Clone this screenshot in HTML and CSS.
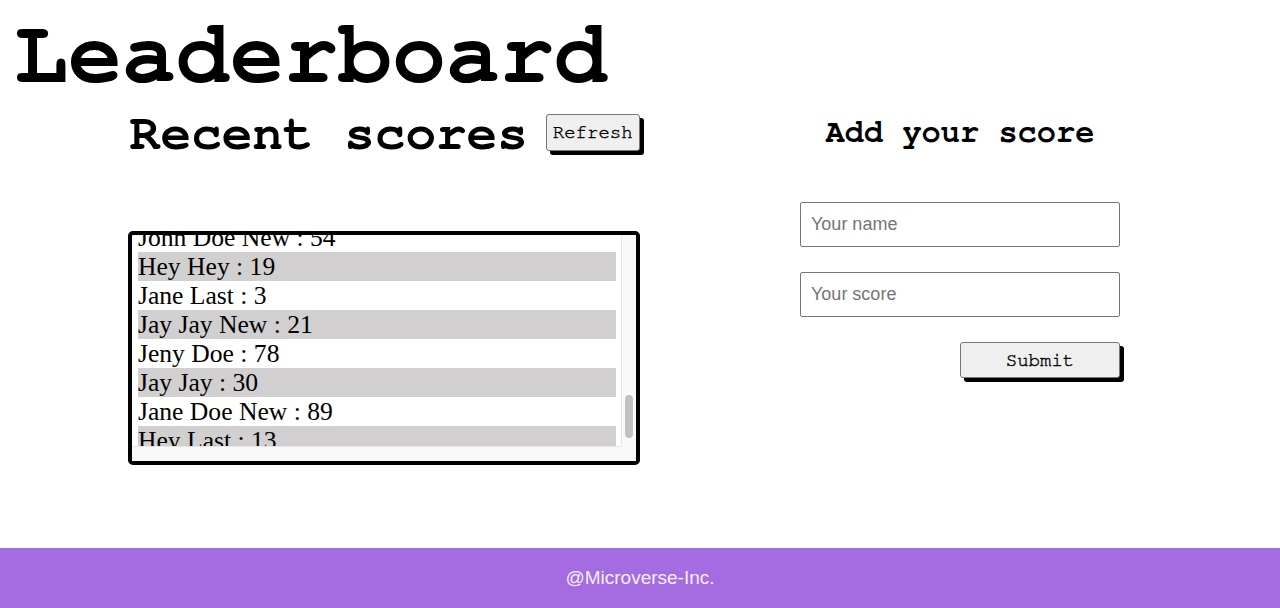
FILE: index.html
```html
<!DOCTYPE html>
<html lang="en">
<head>
<meta charset="utf-8">
<title>Leaderboard</title>
<link rel="stylesheet" href="styles.css">
</head>
<body>
<div class="page">
  <h1 class="title">Leaderboard</h1>
  <main class="main">
    <section class="recent">
      <div class="recent-head">
        <h2 class="recent-title">Recent scores</h2>
        <button class="btn btn-refresh" type="button">Refresh</button>
      </div>
      <div class="scores-box">
        <ul class="scores">
          <li>John Doe : 42</li>
          <li>Jane Doe : 65</li>
          <li>Jay Jay : 12</li>
          <li>Hey Hey : 47</li>
          <li>Jane Last : 8</li>
          <li>John Last : 33</li>
          <li>Jeny Doe : 51</li>
          <li>Hey Last : 27</li>
          <li>John Doe New : 70</li>
          <li>Jane Doe New : 14</li>
          <li>Jay Jay New : 36</li>
          <li>Jeny Last : 90</li>
          <li>John Doe : 23</li>
          <li>Jane Doe : 58</li>
          <li>Hey Hey : 4</li>
          <li>Jay Jay : 61</li>
          <li>Jane Last : 39</li>
          <li>Jeny Doe : 17</li>
          <li>John Last : 82</li>
          <li>Hey Last : 45</li>
          <li>Jane Doe New : 26</li>
          <li>Jay Jay New : 73</li>
          <li>John Doe : 9</li>
          <li>Jeny Last : 64</li>
          <li>Jane Doe : 31</li>
          <li>Hey Hey : 88</li>
          <li>John Last : 15</li>
          <li>John Doe New : 54</li>
          <li>Hey Hey : 19</li>
          <li>Jane Last : 3</li>
          <li>Jay Jay New : 21</li>
          <li>Jeny Doe : 78</li>
          <li>Jay Jay : 30</li>
          <li>Jane Doe New : 89</li>
          <li>Hey Last : 13</li>
          <li>John Doe : 66</li>
        </ul>
        <div class="vbar"><div class="thumb"></div></div>
        <div class="hbar"></div>
        <div class="corner"></div>
      </div>
    </section>
    <section class="add">
      <h2 class="add-title">Add your score</h2>
      <form class="add-form">
        <input class="field" type="text" placeholder="Your name">
        <input class="field" type="text" placeholder="Your score">
        <button class="btn btn-submit" type="button">Submit</button>
      </form>
    </section>
  </main>
</div>
<footer class="footer">@Microverse-Inc.</footer>
<script src="script.js"></script>
</body>
</html>
```

FILE: styles.css
```css
* {
  box-sizing: border-box;
}

html, body {
  margin: 0;
  padding: 0;
}

body {
  min-height: 100vh;
  display: flex;
  flex-direction: column;
  background: #fff;
  color: #000;
  font-family: "Liberation Serif", "Times New Roman", serif;
}

.page {
  flex: 1;
}

.title,
.recent-title,
.add-title,
.btn {
  font-family: "Nimbus Mono PS", "Nimbus Mono L", "FreeMono", "Courier 10 Pitch", "Liberation Mono", "Courier New", monospace;
}

.title {
  margin: 0;
  padding: 10px 0 0 14px;
  font-weight: bold;
  font-size: 90px;
  line-height: 90px;
}

.main {
  display: grid;
  grid-template-columns: 1fr 1fr;
}

.recent {
  padding-left: 128px;
}

.recent-head {
  display: flex;
  align-items: flex-start;
  gap: 18px;
  margin-top: 8px;
}

.recent-title {
  margin: 0 0 0 2px;
  font-weight: bold;
  font-size: 51px;
  line-height: 52px;
}

.btn {
  font-size: 19px;
  color: #000;
  background: #efefef;
  border: 1px solid #767676;
  border-radius: 3px;
  box-shadow: 4px 4px 0 #000;
  -webkit-text-stroke: 0.4px #000;
  cursor: pointer;
}

.btn-refresh {
  height: 37px;
  padding: 0 6px;
  margin-top: 6px;
}

.scores-box {
  width: 512px;
  margin-top: 71px;
  border: 4px solid #000;
  border-radius: 5px;
  overflow: hidden;
  display: grid;
  grid-template-columns: 1fr 15px;
  grid-template-rows: 211px 15px;
}

.scores {
  list-style: none;
  margin: 0;
  padding: 0 0 0 6px;
  overflow: hidden;
  font-size: 25.6px;
  line-height: 29px;
}

.scores li {
  height: 29px;
  margin-right: 5px;
  white-space: nowrap;
}

.scores li:nth-child(odd) {
  background: #d1cfd0;
}

.vbar {
  background: #f9f9f9;
  border-left: 1px solid #e6e6e6;
  padding-top: 160px;
}

.thumb {
  width: 8px;
  height: 43px;
  margin-left: 3px;
  border-radius: 4px;
  background: #c1c1c1;
}

.hbar {
  background: #f9f9f9;
  border-top: 1px solid #e6e6e6;
}

.corner {
  background: #f9f9f9;
}

.add {
  display: flex;
  flex-direction: column;
  align-items: center;
}

.add-title {
  margin: 14px 0 0;
  font-weight: bold;
  font-size: 32px;
  line-height: 36px;
}

.add-form {
  width: 320px;
  margin-top: 52px;
  display: flex;
  flex-direction: column;
  gap: 25px;
}

.field {
  width: 100%;
  height: 45px;
  padding: 0 10px;
  border: 1px solid #767676;
  border-radius: 2px;
  font-family: "Liberation Sans", Arial, sans-serif;
  font-size: 18px;
  color: #000;
  background: #fff;
}

.field::placeholder {
  color: #757575;
}

.btn-submit {
  align-self: flex-end;
  width: 160px;
  height: 36px;
}

.footer {
  height: 60px;
  display: flex;
  align-items: center;
  justify-content: center;
  background: #a56be0;
  color: #f4eefb;
  font-family: "Liberation Sans", Arial, sans-serif;
  font-size: 19px;
}
```

FILE: script.js
```js
document.querySelector('.scores').scrollTop = 795;
```
